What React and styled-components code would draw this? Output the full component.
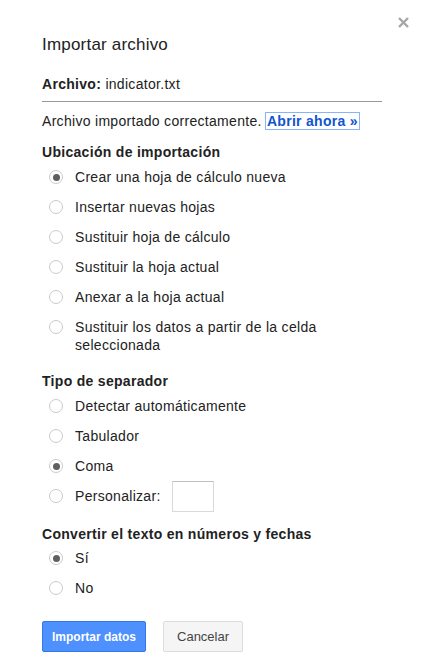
import React from 'react';
import styled, { createGlobalStyle } from 'styled-components';

const GlobalS = createGlobalStyle`
  html, body {
    margin: 0;
    padding: 0;
    background: #fff;
  }
  body {
    font-family: "Liberation Sans", Arial, sans-serif;
    color: #222;
  }
`;

const DialogS = styled.div`
  position: relative;
  width: 340px;
  padding: 33px 42px 20px;
  font-size: 14px;
  letter-spacing: 0.3px;
`;

const CloseS = styled.button`
  position: absolute;
  top: 17px;
  left: 398px;
  width: 11px;
  height: 11px;
  padding: 0;
  border: none;
  background: none;
  cursor: pointer;
  svg {
    display: block;
  }
`;

const TitleS = styled.h2`
  margin: 0;
  font-size: 17px;
  line-height: 24px;
  font-weight: normal;
  letter-spacing: 0.2px;
  color: #222;
`;

const FileRowS = styled.div`
  margin-top: 19px;
  padding-bottom: 8px;
  line-height: 17px;
  border-bottom: 1px solid #999;
  b {
    font-weight: bold;
  }
`;

const StatusS = styled.div`
  margin-top: 11px;
  line-height: 17px;
`;

const LinkS = styled.a`
  color: #15c;
  font-weight: bold;
  text-decoration: none;
  outline: 1px solid #8ab4f8;
  outline-offset: 0;
  padding: 0 1px;
`;

const SectionS = styled.div`
  margin-top: ${(p) => p.$gap}px;
`;

const HeadingS = styled.div`
  font-weight: bold;
  line-height: 17px;
`;

const GroupS = styled.div`
  margin-top: ${(p) => p.$top || 7}px;
  display: flex;
  flex-direction: column;
  gap: 12px;
`;

const RowS = styled.label`
  display: flex;
  align-items: flex-start;
  gap: 12px;
  padding-left: 7px;
  line-height: 18px;
  width: 300px;
`;

const CircleS = styled.span`
  flex: none;
  box-sizing: border-box;
  width: 14px;
  height: 14px;
  margin-top: 2px;
  border: 1px solid #cacaca;
  border-radius: 50%;
  background: #fff;
  display: flex;
  align-items: center;
  justify-content: center;
  &::after {
    content: '';
    width: 7px;
    height: 7px;
    border-radius: 50%;
    background: #5f5f5f;
    display: ${(p) => (p.$on ? 'block' : 'none')};
  }
`;

const CustomS = styled.span`
  display: flex;
  align-items: center;
  gap: 11px;
`;

const BoxS = styled.input`
  box-sizing: border-box;
  width: 42px;
  height: 31px;
  margin: -6.5px 0;
  border: 1px solid #d9d9d9;
  border-top-color: #c0c0c0;
  background: #fff;
  outline: none;
`;

const ButtonsS = styled.div`
  margin-top: 24px;
  display: flex;
  gap: 17px;
`;

const ButtonS = styled.button`
  box-sizing: border-box;
  height: 31px;
  padding: ${(p) => (p.$primary ? '0 9px' : '0 13px')};
  border-radius: 2px;
  border: 1px solid ${(p) => (p.$primary ? '#3079ed' : '#dcdcdc')};
  background: ${(p) => (p.$primary ? '#4d90fe' : '#f5f5f5')};
  color: ${(p) => (p.$primary ? '#fff' : '#444')};
  font-family: "Liberation Sans", Arial, sans-serif;
  font-size: ${(p) => (p.$primary ? '12px' : '13px')};
  font-weight: ${(p) => (p.$primary ? 'bold' : 'normal')};
  letter-spacing: 0;
  cursor: pointer;
`;

const Radio = ({ on, children }) => (
  <RowS>
    <CircleS $on={on} />
    <span>{children}</span>
  </RowS>
);

export default function App() {
  return (
    <>
      <GlobalS />
      <DialogS>
        <CloseS aria-label="Cerrar">
          <svg width="11" height="11" viewBox="0 0 11 11">
            <path d="M1 1 L10 10 M10 1 L1 10" stroke="#a6a6a6" strokeWidth="2.4" />
          </svg>
        </CloseS>
        <TitleS>Importar archivo</TitleS>
        <FileRowS>
          <b>Archivo:</b> indicator.txt
        </FileRowS>
        <StatusS>
          Archivo importado correctamente. <LinkS href="#">Abrir ahora »</LinkS>
        </StatusS>

        <SectionS $gap={14}>
          <HeadingS>Ubicación de importación</HeadingS>
          <GroupS>
            <Radio on>Crear una hoja de cálculo nueva</Radio>
            <Radio>Insertar nuevas hojas</Radio>
            <Radio>Sustituir hoja de cálculo</Radio>
            <Radio>Sustituir la hoja actual</Radio>
            <Radio>Anexar a la hoja actual</Radio>
            <Radio>Sustituir los datos a partir de la celda seleccionada</Radio>
          </GroupS>
        </SectionS>

        <SectionS $gap={19}>
          <HeadingS>Tipo de separador</HeadingS>
          <GroupS>
            <Radio>Detectar automáticamente</Radio>
            <Radio>Tabulador</Radio>
            <Radio on>Coma</Radio>
            <Radio>
              <CustomS>
                Personalizar: <BoxS type="text" />
              </CustomS>
            </Radio>
          </GroupS>
        </SectionS>

        <SectionS $gap={21}>
          <HeadingS>Convertir el texto en números y fechas</HeadingS>
          <GroupS $top={6}>
            <Radio on>Sí</Radio>
            <Radio>No</Radio>
          </GroupS>
        </SectionS>

        <ButtonsS>
          <ButtonS $primary>Importar datos</ButtonS>
          <ButtonS>Cancelar</ButtonS>
        </ButtonsS>
      </DialogS>
    </>
  );
}
